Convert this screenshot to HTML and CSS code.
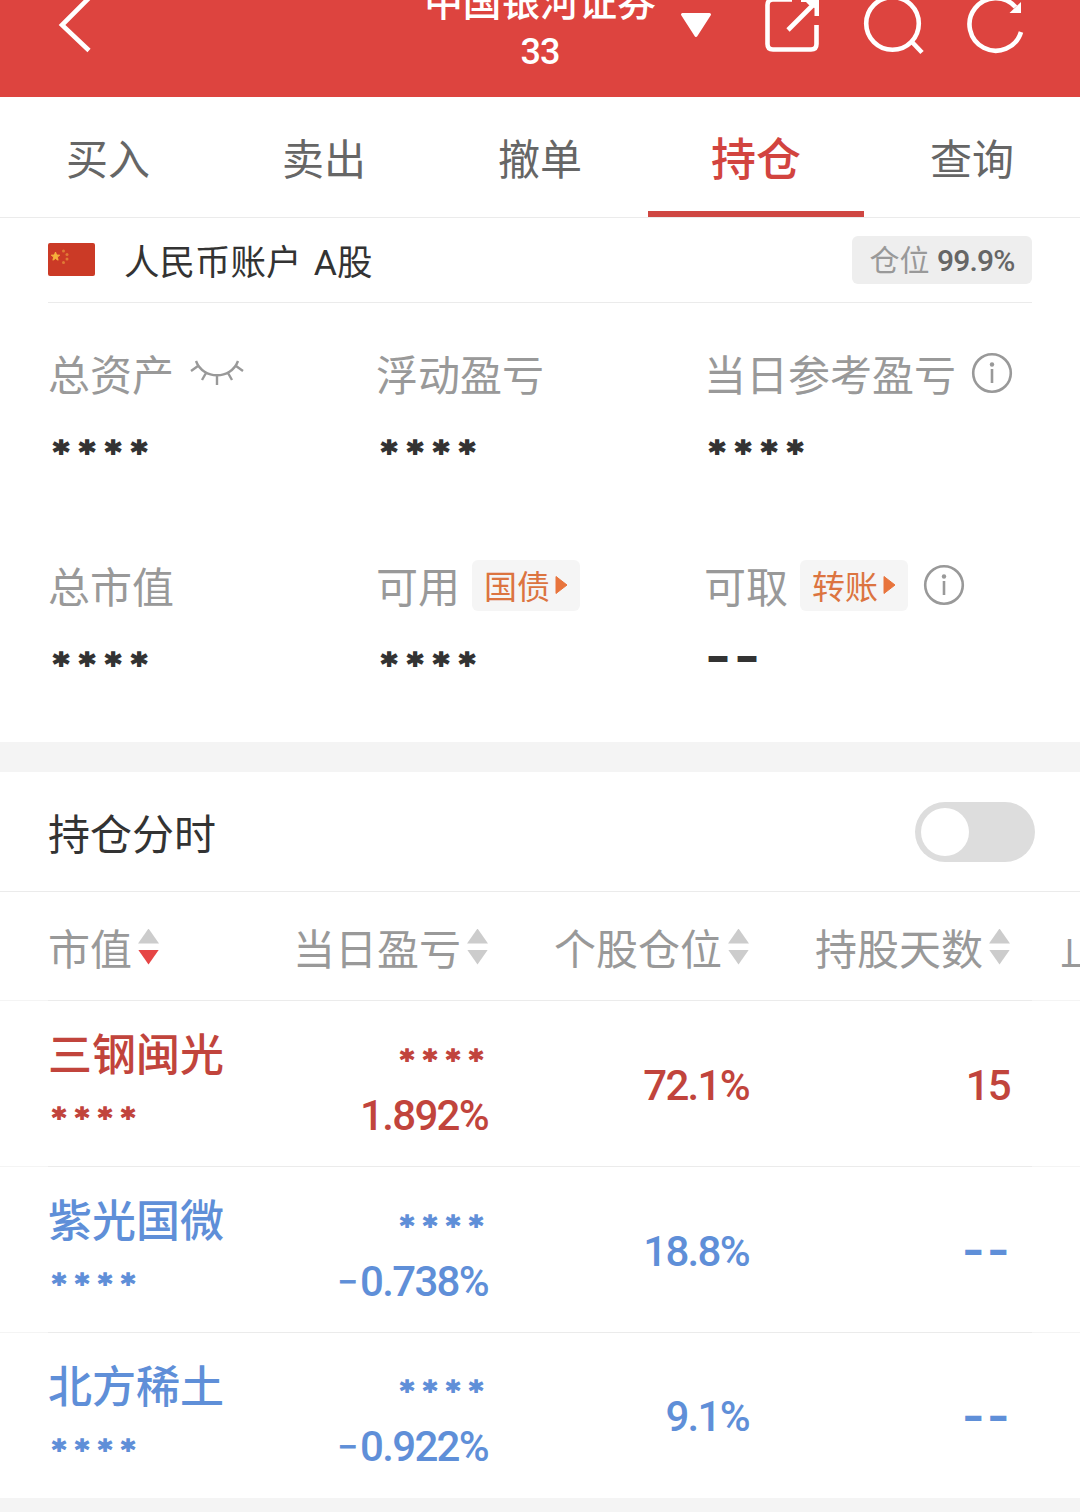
FILE: index.html
```html
<!DOCTYPE html>
<html lang="zh-CN">
<head>
  <meta charset="UTF-8" />
  <meta name="viewport" content="width=device-width, initial-scale=1.0"/>
  <title>持仓</title>
  <link rel="stylesheet" href="styles.css">
</head>
<body>
  <!-- Top bar -->
  <header class="topbar">
    <svg class="back" width="60" height="60" viewBox="0 0 60 60"><path d="M41 -2 L14 25 L41 50.500" /></svg>
    <div class="title">
      <div class="broker">中国银河证券</div>
      <div class="account-no">33</div>
    </div>
    <div class="actions">
      <svg class="caret" width="32" height="60" viewBox="0 0 32 60"><path d="M2.500 14.500 H29.500 L16 35.500 Z" /></svg>
      <svg class="share" width="60" height="60" viewBox="0 0 60 60">
        <path d="M29 -.5 H10 Q4.500 -.5 4.500 5 V44 Q4.500 49.500 10 49.500 H48 Q53.500 49.500 53.500 44 V25 M25 30 L52 3" />
        <path class="fill" d="M38 -3 H56 V16 H51.500 V8 L46 5 L43 2 H38 Z" />
      </svg>
      <svg class="search" width="64" height="60" viewBox="0 0 64 60"><circle cx="29.500" cy="23.500" r="26.300" /><path d="M49 42 L59 52.500" /></svg>
      <svg class="refresh" width="60" height="60" viewBox="0 0 60 60">
        <path d="M55 32 A26.300 26.300 0 1 1 49.500 7" />
        <path class="fill" d="M55 2 V13 H43.500 Z" />
      </svg>
    </div>
  </header>

  <!-- Tabs -->
  <nav class="tabs">
    <a class="tab">买入</a>
    <a class="tab">卖出</a>
    <a class="tab">撤单</a>
    <a class="tab active">持仓</a>
    <a class="tab">查询</a>
  </nav>

  <!-- Account -->
  <section class="account">
    <div class="account-head">
      <svg class="flag" width="47" height="34" viewBox="0 0 47 34">
        <rect width="47" height="33" rx="2" fill="#cb3a26" />
        <path d="M7.500 9 L8.600 12 L11.700 12.200 L9.300 14.100 L10.100 17.200 L7.500 15.500 L4.900 17.200 L5.700 14.100 L3.300 12.200 L6.400 12 Z" fill="#f6b13c" stroke="#f6b13c" />
        <g fill="#e07a35"><circle cx="15.500" cy="8" r="1.500" /><circle cx="19" cy="11.500" r="1.500" /><circle cx="19" cy="16" r="1.500" /><circle cx="15.500" cy="19.500" r="1.500" /></g>
      </svg>
      <span class="account-name">人民币账户 A股</span>
      <span class="position">仓位 <b>99.9%</b></span>
    </div>

    <div class="summary">
      <div class="item">
        <div class="label">总资产
          <svg class="eye" width="54" height="30" viewBox="0 0 54 30"><path d="M6 3 C13 22 41 22 48 3 M8 8 L1 13 M46 8 L53 13 M16 15 L12 22 M38 15 L42 22 M27 18 V27" /></svg>
        </div>
        <div class="value">****</div>
      </div>
      <div class="item">
        <div class="label">浮动盈亏</div>
        <div class="value">****</div>
      </div>
      <div class="item">
        <div class="label">当日参考盈亏
          <svg class="info" width="42" height="42" viewBox="0 0 42 42"><circle cx="21" cy="21" r="18.800" /><path d="M21 17 V31" /><circle class="dot" cx="21" cy="12.500" r="2.200" /></svg>
        </div>
        <div class="value">****</div>
      </div>
      <div class="item">
        <div class="label">总市值</div>
        <div class="value">****</div>
      </div>
      <div class="item">
        <div class="label">可用
          <span class="tag">国债<svg width="13" height="20" viewBox="0 0 13 20"><path d="M1 1.500 L12 10 L1 18.500 Z" /></svg></span>
        </div>
        <div class="value">****</div>
      </div>
      <div class="item">
        <div class="label">可取
          <span class="tag">转账<svg width="13" height="20" viewBox="0 0 13 20"><path d="M1 1.500 L12 10 L1 18.500 Z" /></svg></span>
          <svg class="info" width="42" height="42" viewBox="0 0 42 42"><circle cx="21" cy="21" r="18.800" /><path d="M21 17 V31" /><circle class="dot" cx="21" cy="12.500" r="2.200" /></svg>
        </div>
        <div class="value dash">––</div>
      </div>
    </div>
  </section>

  <!-- Intraday switch -->
  <section class="intraday">
    <span>持仓分时</span>
    <span class="switch"></span>
  </section>

  <!-- Holdings -->
  <section class="holdings">
    <div class="row head">
      <div class="first">市值<i class="sort desc"></i></div>
      <div>当日盈亏<i class="sort"></i></div>
      <div>个股仓位<i class="sort"></i></div>
      <div>持股天数<i class="sort"></i></div>
      <div class="more">止</div>
    </div>
    <div class="row up">
      <div class="first"><span class="name">三钢闽光</span><span class="mask">****</span></div>
      <div class="profit"><span class="mask">****</span><span class="num">1.892%</span></div>
      <div class="num">72.1%</div>
      <div class="num">15</div>
    </div>
    <div class="row down">
      <div class="first"><span class="name">紫光国微</span><span class="mask">****</span></div>
      <div class="profit"><span class="mask">****</span><span class="num"><i class="minus">–</i>0.738%</span></div>
      <div class="num">18.8%</div>
      <div class="dash">––</div>
    </div>
    <div class="row down">
      <div class="first"><span class="name">北方稀土</span><span class="mask">****</span></div>
      <div class="profit"><span class="mask">****</span><span class="num"><i class="minus">–</i>0.922%</span></div>
      <div class="num">9.1%</div>
      <div class="dash">––</div>
    </div>
  </section>
</body>
</html>
```
FILE: styles.css
```css
* {
  box-sizing: border-box;
}
body {
  font-family: Roboto, "Noto Sans CJK SC", sans-serif;
  background: #f4f4f4;
  color: #333;
  margin: 0;
  width: 1080px;
  height: 1512px;
  overflow: hidden;
}
svg {
  display: block;
  flex: none;
  fill: none;
}
i {
  font-style: normal;
}

/* Top bar */
.topbar {
  height: 97px;
  background: #dd443f;
  color: #fff;
  display: grid;
  grid-template-columns: 424px 232px 1fr;
  overflow: hidden;
}
.topbar svg {
  stroke: #fff;
  stroke-width: 4.6;
}
.topbar .fill {
  fill: #fff;
  stroke: none;
}
.back {
  margin-left: 48px;
}
.title {
  text-align: center;
  font-weight: 500;
  white-space: nowrap;
}
.broker {
  font-family: "Noto Sans CJK SC", sans-serif;
  font-size: 38.6px;
  line-height: 44px;
  margin-top: -23px;
}
.account-no {
  font-size: 36px;
  line-height: 44px;
  margin-top: 9px;
  letter-spacing: -1px;
}
.actions {
  display: flex;
  padding-left: 24px;
}
.topbar .caret {
  fill: #fff;
  stroke-width: 3;
  stroke-linejoin: round;
}
.share {
  margin-left: 51px;
}
.search {
  margin-left: 40px;
}
.refresh {
  margin-left: 39px;
}

/* Tabs */
.tabs {
  display: flex;
  height: 121px;
  background: #fff;
  border-bottom: 1px solid #ebebeb;
  font-family: "Noto Sans CJK SC", sans-serif;
}
.tab {
  flex: 1;
  text-align: center;
  font-size: 42px;
  line-height: 120px;
  color: #666;
}
.tab.active {
  color: #d2443f;
  font-size: 45px;
  font-weight: 500;
  border-bottom: 6px solid #cf4742;
}

/* Account */
.account {
  background: #fff;
  height: 524px;
  padding: 0 48px;
}
.account-head {
  display: flex;
  align-items: center;
  height: 85px;
  border-bottom: 1px solid #ebebeb;
}
.account-name {
  font-family: Roboto, "Noto Sans CJK SC", sans-serif;
  font-size: 35.5px;
  line-height: 52px;
  word-spacing: 3.5px;
  margin-left: 29px;
  padding-top: 5px;
}
.position {
  margin-left: auto;
  width: 180px;
  height: 48px;
  line-height: 49px;
  border-radius: 6px;
  background: #eee;
  color: #999;
  font-size: 30px;
  text-align: center;
  white-space: nowrap;
}
.position b {
  color: #666;
  font-weight: 500;
  letter-spacing: -0.8px;
}
.summary {
  display: grid;
  grid-template-columns: repeat(3, 328px);
  grid-auto-rows: 212px;
  padding-top: 40px;
}
.label {
  display: flex;
  align-items: center;
  height: 60px;
  font-size: 42px;
  line-height: 60px;
  color: #999;
  white-space: nowrap;
  font-family: "Noto Sans CJK SC", sans-serif;
}
.eye {
  margin-left: 16px;
  stroke: #999;
  stroke-width: 2.4;
}
.info {
  margin-left: 15px;
  stroke: #999;
  stroke-width: 2.6;
}
.info .dot {
  fill: #999;
  stroke: none;
}
.value, .mask {
  font-family: "DejaVu Sans", sans-serif;
  font-weight: bold;
  -webkit-text-stroke: 1.6px currentColor;
}
.value {
  font-size: 31px;
  line-height: 60px;
  letter-spacing: 9.8px;
  padding: 18px 0 0 5px;
}
.dash {
  font-family: "DejaVu Sans", sans-serif;
  font-weight: bold;
}
.value.dash {
  font-size: 48px;
  letter-spacing: 5px;
  padding: 10px 0 0 2px;
  -webkit-text-stroke: 0;
}
.tag {
  display: flex;
  align-items: center;
  gap: 5px;
  width: 108px;
  height: 51px;
  padding-left: 12px;
  margin-left: 12px;
  border-radius: 6px;
  background: #f5f5f5;
  color: #dc7440;
  font-size: 33px;
}
.tag svg {
  fill: #e8743c;
  stroke: #e8743c;
  stroke-linejoin: round;
}

/* Intraday switch */
.intraday {
  display: flex;
  align-items: center;
  justify-content: space-between;
  height: 120px;
  margin-top: 30px;
  padding: 0 45px 0 48px;
  background: #fff;
  border-bottom: 1px solid #ebebeb;
  font-family: "Noto Sans CJK SC", sans-serif;
  font-size: 42px;
}
.switch {
  width: 120px;
  height: 60px;
  border-radius: 30px;
  background: #ddd;
  padding: 6px;
}
.switch::before {
  content: "";
  display: block;
  width: 48px;
  height: 48px;
  border-radius: 50%;
  background: #fff;
}

/* Holdings */
.row {
  display: grid;
  grid-template-columns: 180px 260px 261px 261px 1fr;
  align-items: center;
  height: 166px;
  padding-left: 48px;
  overflow: hidden;
  text-align: right;
  white-space: nowrap;
  background: linear-gradient(90deg, #f4f4f4 48px, #ebebeb 48px, #ebebeb 1032px, #f4f4f4 1032px) bottom / 100% 1px no-repeat #fff;
}
.row:last-child {
  height: 165px;
  background: #fff;
}
.row.head {
  height: 109px;
  font-family: "Noto Sans CJK SC", sans-serif;
  font-size: 42px;
  color: #999;
}
.head > div {
  display: flex;
  align-items: center;
  justify-content: flex-end;
}
.row .first {
  text-align: left;
  justify-content: flex-start;
}
.head .more {
  justify-content: flex-start;
  padding-left: 50px;
}
.sort {
  width: 21px;
  height: 36px;
  margin-left: 6px;
  display: flex;
  flex-direction: column;
  justify-content: space-between;
}
.sort::before, .sort::after {
  content: "";
  height: 15px;
  background: #ccc;
  clip-path: polygon(50% 0, 100% 100%, 0 100%);
}
.sort::after {
  clip-path: polygon(0 0, 100% 0, 50% 100%);
}
.sort.desc::after {
  background: #e64545;
}
.up {
  color: #c1443c;
}
.down {
  color: #5f8fd8;
}
.name {
  display: block;
  font-family: "Noto Sans CJK SC", sans-serif;
  font-size: 44px;
  font-weight: 500;
  line-height: 60px;
  padding-top: 2px;
}
.mask {
  display: block;
  font-size: 27px;
  line-height: 60px;
  letter-spacing: 8.9px;
  -webkit-text-stroke-width: 1.3px;
}
.first .mask {
  padding: 6px 0 0 4px;
}
.profit .mask {
  line-height: 59px;
  padding-top: 4px;
  margin-right: -4px;
}
.num {
  font-size: 42px;
  font-weight: 500;
  letter-spacing: -1.7px;
}
.row > .num {
  padding-top: 2px;
}
.profit .num {
  display: block;
  line-height: 54px;
}
.row .dash {
  font-size: 41px;
  letter-spacing: 4.5px;
  margin-right: -3px;
}
.minus {
  font-family: "DejaVu Sans", sans-serif;
  font-size: 37px;
  line-height: 1;
  vertical-align: 4px;
  letter-spacing: 3px;
  -webkit-text-stroke: 0.8px currentColor;
}
```
